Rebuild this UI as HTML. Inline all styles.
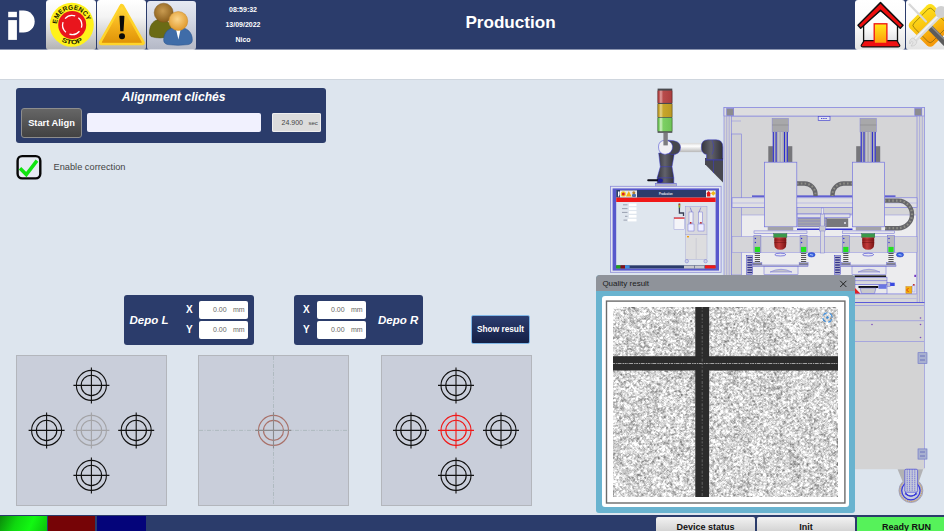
<!DOCTYPE html>
<html lang="en">
<head>
<meta charset="utf-8">
<title>Production</title>
<style>
html,body{margin:0;padding:0;}
body{width:944px;height:531px;overflow:hidden;position:relative;background:#dde5ee;font-family:"Liberation Sans",sans-serif;}
.abs{position:absolute;}
#hdr{left:0;top:0;width:944px;height:50px;background:linear-gradient(#2b3c6b 0,#2b3c6b 49px,#8b95b0 49px,#8b95b0 50px);}
#white{left:0;top:50px;width:944px;height:29px;background:#fff;border-bottom:1px solid #cfd6de;}
.hbtn{position:absolute;top:0;height:50px;border-radius:3px;background:linear-gradient(#ffffff 0%,#f4f4f4 34%,#c9c9c9 78%,#b4b4b4 98%,#dcdcdc 98%,#dcdcdc 100%);}
.htxt{position:absolute;color:#fff;font-weight:bold;font-size:7px;line-height:8px;text-align:center;width:80px;left:203px;}
#title{left:410.5px;width:200px;top:12.6px;text-align:center;color:#fff;font-weight:bold;font-size:17.1px;line-height:20px;}
.panel{position:absolute;background:#2b3c6b;border-radius:3px;}
.ital{font-style:italic;font-weight:bold;color:#fff;}
.inp{position:absolute;background:#fff;border-radius:2px;}
.small{position:absolute;font-size:7px;line-height:8px;color:#666;}
.lbl{position:absolute;color:#fff;font-weight:bold;font-size:10px;line-height:12px;}
.tbox{position:absolute;width:149px;height:149px;top:355px;background:#c9ceda;border:1px solid #b3b6bc;box-sizing:content-box;}
#bbar{left:0;top:515px;width:944px;height:16px;background:#2b3c6b;}
.bbtn{position:absolute;top:517px;height:14px;border-radius:2px 2px 0 0;background:linear-gradient(#f2f2f2,#d4d4d4);font-weight:bold;font-size:9px;line-height:20px;text-align:center;color:#111;overflow:hidden;}
</style>
</head>
<body>
<div class="abs" id="hdr"></div>
<div class="abs" id="white"></div>

<!-- header buttons -->
<div class="hbtn" style="left:46px;width:49.5px;"></div>
<div class="hbtn" style="left:97px;width:49px;"></div>
<div class="hbtn" style="left:147px;width:49px;top:1px;height:49px;background:linear-gradient(#e6e9f2 0%,#d4d8e4 40%,#b4b8c6 98%,#dcdee6 98%,#dcdee6 100%);"></div>
<div class="hbtn" style="left:855px;width:50px;background:linear-gradient(#ffffff 0%,#fafafa 50%,#e4e4e4 98%,#f2f2f2 98%,#f2f2f2 100%);"></div>
<div class="hbtn" style="left:906px;width:40px;background:linear-gradient(#ffffff 0%,#fafafa 50%,#e4e4e4 98%,#f2f2f2 98%,#f2f2f2 100%);"></div>

<div class="htxt" style="top:6px;">08:59:32</div>
<div class="htxt" style="top:20.7px;">13/09/2022</div>
<div class="htxt" style="top:36px;">Nico</div>
<div class="abs" id="title">Production</div>

<!-- alignment panel -->
<div class="panel" style="left:16px;top:88px;width:310px;height:55px;"></div>
<div class="abs ital" style="left:73.7px;top:90px;width:200px;text-align:center;font-size:12.13px;line-height:14px;">Alignment clichés</div>
<div class="abs" style="left:21px;top:108px;width:59px;height:28px;border:1px solid #8d8d8d;border-radius:3px;background:linear-gradient(#666666,#424242);color:#fff;font-weight:bold;font-size:9.3px;line-height:28px;text-align:center;">Start Align</div>
<div class="inp" style="left:87px;top:113px;width:174px;height:19px;background:#f1f1fe;"></div>
<div class="inp" style="left:272px;top:113px;width:49px;height:19px;background:#dcdcdc;box-shadow:inset 0 0 0 1px #efefef;"></div>
<div class="small" style="left:281.6px;top:119px;color:#444;">24.900</div>
<div class="small" style="left:308.4px;top:119.3px;color:#444;font-size:6.1px;">sec</div>

<!-- checkbox -->
<svg class="abs" style="left:0;top:140px;" width="60" height="50" viewBox="0 140 60 50"><rect x="17.6" y="156.1" width="22.7" height="22.3" rx="4.6" fill="#e6ebf3" stroke="#080808" stroke-width="2.4"/><path d="M20 168.2 L26.3 174.6 L37 160.6" fill="none" stroke="#10e410" stroke-width="3.5"/></svg>
<div class="abs" style="left:53.5px;top:161.7px;font-size:9.25px;line-height:11px;color:#444;">Enable correction</div>

<!-- Depo L -->
<div class="panel" style="left:124px;top:295px;width:130px;height:50px;"></div>
<div class="abs ital" style="left:129.5px;top:313px;font-size:11.5px;line-height:14px;">Depo L</div>
<div class="lbl" style="left:186px;top:304px;">X</div>
<div class="lbl" style="left:186px;top:324px;">Y</div>
<div class="inp" style="left:199px;top:301px;width:49px;height:18px;"></div>
<div class="inp" style="left:199px;top:321px;width:49px;height:18px;"></div>
<div class="small" style="left:213px;top:306px;">0.00</div><div class="small" style="left:233px;top:306px;">mm</div>
<div class="small" style="left:213px;top:326px;">0.00</div><div class="small" style="left:233px;top:326px;">mm</div>

<!-- Depo R -->
<div class="panel" style="left:294px;top:295px;width:129px;height:50px;"></div>
<div class="abs ital" style="left:378px;top:313px;font-size:11.5px;line-height:14px;">Depo R</div>
<div class="lbl" style="left:303px;top:304px;">X</div>
<div class="lbl" style="left:303px;top:324px;">Y</div>
<div class="inp" style="left:317px;top:301px;width:49px;height:18px;"></div>
<div class="inp" style="left:317px;top:321px;width:49px;height:18px;"></div>
<div class="small" style="left:331px;top:306px;">0.00</div><div class="small" style="left:351px;top:306px;">mm</div>
<div class="small" style="left:331px;top:326px;">0.00</div><div class="small" style="left:351px;top:326px;">mm</div>

<!-- Show result -->
<div class="abs" style="left:471px;top:315px;width:57px;height:27px;border:1px solid #7fb6e6;border-radius:2px;background:linear-gradient(#2c3e70,#141f45);color:#fff;font-weight:bold;font-size:8.3px;line-height:27px;text-align:center;">Show result</div>

<!-- target boxes -->
<div class="tbox" style="left:16px;"></div>
<div class="tbox" style="left:198px;"></div>
<div class="tbox" style="left:381px;"></div>

<!-- bottom bar -->
<div class="abs" id="bbar"></div>
<div class="abs" style="left:0;top:516px;width:47px;height:15px;background:linear-gradient(115deg,#0a8a0a 0%,#0fd80f 35%,#12f812 65%,#0cc00c 100%);"></div>
<div class="abs" style="left:48px;top:516px;width:47px;height:15px;background:#760406;"></div>
<div class="abs" style="left:97px;top:516px;width:49px;height:15px;background:#04047a;"></div>
<div class="bbtn" style="left:656px;width:99px;">Device status</div>
<div class="bbtn" style="left:757px;width:98px;">Init</div>
<div class="bbtn" style="left:857px;width:99px;background:#56f25a;border-radius:0;">Ready RUN</div>

<!-- ILLUSTRATION SVG -->
<svg class="abs" id="art" style="left:0;top:0;" width="944" height="531" viewBox="0 0 944 531">
<defs>
<linearGradient id="gTri" x1="0" y1="0" x2="0" y2="1"><stop offset="0" stop-color="#ffd83a"/><stop offset="0.5" stop-color="#f4b21c"/><stop offset="1" stop-color="#e09408"/></linearGradient>
<radialGradient id="gHeadB" cx="0.45" cy="0.4" r="0.6"><stop offset="0" stop-color="#c99b50"/><stop offset="1" stop-color="#8a5e1c"/></radialGradient>
<radialGradient id="gHeadF" cx="0.45" cy="0.4" r="0.6"><stop offset="0" stop-color="#fbd58a"/><stop offset="1" stop-color="#e09a2e"/></radialGradient>
<linearGradient id="gDoor" x1="0" y1="0" x2="0" y2="1"><stop offset="0" stop-color="#ffe81a"/><stop offset="1" stop-color="#ff9a0a"/></linearGradient>
<linearGradient id="gWall" x1="0" y1="0" x2="0" y2="1"><stop offset="0" stop-color="#ffffff"/><stop offset="0.55" stop-color="#fbfbfb"/><stop offset="1" stop-color="#dcdce0"/></linearGradient>
<linearGradient id="gDia" x1="0" y1="0" x2="1" y2="0.35"><stop offset="0" stop-color="#ffe61e"/><stop offset="0.5" stop-color="#fbc812"/><stop offset="1" stop-color="#f59a0a"/></linearGradient>
<g id="tgt"><circle r="15" fill="none" stroke-width="1.1"/><circle r="10.2" fill="none" stroke-width="1.1"/><path d="M-18 0H18M0 -18V18" fill="none" stroke-width="1.1"/></g>
<path id="arcTop" d="M56.84 23.93 A15.4 15.4 0 0 1 87.00 20.76"/>
<path id="arcBot" d="M61.41 41.00 A19.3 19.3 0 0 0 82.99 41.00"/>
</defs>

<!-- logo -->
<g fill="#fff"><rect x="8.2" y="11.8" width="8.7" height="5.4"/><rect x="8.2" y="20.1" width="8.7" height="19.8"/><path d="M19.2 10.4H23.6A11.1 11.1 0 0 1 23.6 32.6H19.2Z"/></g>

<!-- emergency stop -->
<circle cx="71.8" cy="24.8" r="22" fill="#fff21a"/>
<circle cx="72.2" cy="25" r="14" fill="#e9151d"/>
<circle cx="72.2" cy="25" r="9.6" fill="none" stroke="#fff" stroke-width="1.3" stroke-dasharray="11 4.1" transform="rotate(-50 72.2 25)"/>
<text font-family="Liberation Sans, sans-serif" font-weight="bold" font-size="6.6" fill="#1a1a00" textLength="42.5" lengthAdjust="spacingAndGlyphs"><textPath href="#arcTop" textLength="42.5" lengthAdjust="spacingAndGlyphs">EMERGENCY</textPath></text>
<text font-family="Liberation Sans, sans-serif" font-weight="bold" font-size="6.4" fill="#1a1a00"><textPath href="#arcBot" textLength="22.4" lengthAdjust="spacingAndGlyphs">STOP</textPath></text>

<!-- warning -->
<path d="M121.8 6.4 L142.3 42.8 L101.3 42.8 Z" fill="#ffd42a" stroke="#ffd42a" stroke-width="5" stroke-linejoin="round"/>
<path d="M121.8 7.6 L141.2 42.2 L102.4 42.2 Z" fill="url(#gTri)" stroke="url(#gTri)" stroke-width="1.2" stroke-linejoin="round"/>
<path d="M119.4 16.6 Q119.4 15.8 120.2 15.8 H123.6 Q124.4 15.8 124.4 16.6 L123.5 31.2 H120.3Z" fill="#0a0a0a"/><circle cx="122" cy="36.2" r="3" fill="#0a0a0a"/>

<!-- users -->
<path d="M149.5 33 C149.5 24 154 19.5 160.5 19.5 C167 19.5 171.5 24 171.5 30 L171.5 36 Q160 39.5 151 36.5 Q149.5 35.5 149.5 33Z" fill="#6b6b15" stroke="#54540e" stroke-width="0.6"/>
<circle cx="163.7" cy="12.7" r="9.5" fill="url(#gHeadB)" stroke="#7a5418" stroke-width="0.5"/>
<path d="M163.7 40 C163.7 32 169 27.3 178 27.3 C187 27.3 192.3 32 192.3 40 Q192.3 43.8 188 44.6 Q178 46 168 44.6 Q163.7 43.8 163.7 40Z" fill="#3f6ca8" stroke="#2d568e" stroke-width="0.6"/>
<path d="M175.8 28.5 L180.8 28.5 L178.4 39.5Z" fill="#fff"/>
<circle cx="178.3" cy="21" r="9.5" fill="url(#gHeadF)" stroke="#c98a2a" stroke-width="0.5"/>

<!-- home -->
<path d="M863.6 24 L863.6 44 L897.5 44 L897.5 24 L880.5 10.5Z" fill="url(#gWall)" stroke="#111" stroke-width="1.3"/>
<path d="M864.2 40.6 L896.9 40.6 L899.8 45.2 Q900 46.9 898.2 46.9 L862.8 46.9 Q861 46.9 861.2 45.2Z" fill="#f01010" stroke="#111" stroke-width="1.1" stroke-linejoin="round"/>
<rect x="874.2" y="23.8" width="12.7" height="19.6" fill="url(#gDoor)" stroke="#f01010" stroke-width="1.3"/>
<path d="M880.5 2.6 L903 25.2 L900.3 28.2 L880.5 10.2 L860.7 28.2 L858 25.2Z" fill="#ee0f0f" stroke="#111" stroke-width="1.5" stroke-linejoin="round"/>

<!-- tools -->
<rect x="913.7" y="8.9" width="33" height="33" rx="4.5" transform="rotate(45 930.2 25.4)" fill="url(#gDia)"/>
<rect x="917.2" y="12.4" width="26" height="26" rx="3" transform="rotate(45 930.2 25.4)" fill="none" stroke="#6a5a10" stroke-width="0.6"/>
<path d="M909.5 4.5 L926 21.5" stroke="#d8d8d8" stroke-width="2.2" stroke-linecap="round"/>
<path d="M929 26.5 L946 44" stroke="#5c5c5c" stroke-width="6"/>
<path d="M930 25 L946 41" stroke="#8e8e8e" stroke-width="1.4"/>
<path d="M914.5 40.5 L946 9" stroke="#dcdcdc" stroke-width="4.6"/>
<path d="M915 39 L944 10" stroke="#f4f4f4" stroke-width="1.6"/>
<path d="M909.8 44 Q908.6 39.5 913 37.8 L917 41.6 Q915.6 46.6 911 46 L913.2 42.6 L911.6 41.2Z" fill="#e4e4e4" stroke="#bdbdbd" stroke-width="0.5"/>
<circle cx="941" cy="12" r="6" fill="#d0d0d0"/>

<!-- targets left -->
<g stroke="#111"><use href="#tgt" x="91.4" y="385.4"/><use href="#tgt" x="46.6" y="430.4"/><use href="#tgt" x="136.2" y="430.4"/><use href="#tgt" x="91.4" y="475.4"/></g>
<g stroke="#a3a3a6"><use href="#tgt" x="91.4" y="430.4"/></g>
<!-- middle -->
<path d="M199 430.4H349M273.5 356V505" stroke="#a4b2b4" stroke-width="0.7" stroke-dasharray="4 1.5 1 1.5" fill="none"/>
<g stroke="#a9726a" fill="none" stroke-width="1.15"><circle cx="273.5" cy="430.4" r="15"/><circle cx="273.5" cy="430.4" r="10"/><path d="M255.2 430.4H291.4M273.5 412.2V448.4" stroke="#8a8a8c" stroke-width="1.1"/></g>
<!-- targets right -->
<g stroke="#111"><use href="#tgt" x="456" y="385.4"/><use href="#tgt" x="411" y="430.4"/><use href="#tgt" x="501" y="430.4"/><use href="#tgt" x="456" y="475.4"/></g>
<g stroke="#f01818"><use href="#tgt" x="456" y="430.4"/></g>
<defs>
<linearGradient id="gTube" x1="0" y1="0" x2="0" y2="1"><stop offset="0" stop-color="#d8d8d8"/><stop offset="0.35" stop-color="#ffffff"/><stop offset="1" stop-color="#b8b8b8"/></linearGradient>
<linearGradient id="gJoint" x1="0" y1="0" x2="1" y2="0"><stop offset="0" stop-color="#34343c"/><stop offset="0.45" stop-color="#62626c"/><stop offset="1" stop-color="#303038"/></linearGradient>
<linearGradient id="gRed" x1="0" y1="0" x2="1" y2="0"><stop offset="0" stop-color="#8c3030"/><stop offset="0.1" stop-color="#b84848"/><stop offset="0.22" stop-color="#e0a0a0"/><stop offset="0.38" stop-color="#b84c4c"/><stop offset="0.9" stop-color="#ac4040"/><stop offset="1" stop-color="#7c2c2c"/></linearGradient>
<linearGradient id="gYel" x1="0" y1="0" x2="1" y2="0"><stop offset="0" stop-color="#94781c"/><stop offset="0.1" stop-color="#c8a42c"/><stop offset="0.22" stop-color="#e6d48c"/><stop offset="0.38" stop-color="#c8a62c"/><stop offset="0.9" stop-color="#bc9a24"/><stop offset="1" stop-color="#8c7018"/></linearGradient>
<linearGradient id="gGrn" x1="0" y1="0" x2="1" y2="0"><stop offset="0" stop-color="#4c9838"/><stop offset="0.1" stop-color="#78cc60"/><stop offset="0.22" stop-color="#d0f0c4"/><stop offset="0.38" stop-color="#7cd064"/><stop offset="0.9" stop-color="#70c458"/><stop offset="1" stop-color="#4c9038"/></linearGradient>
<linearGradient id="gPad" x1="0" y1="0" x2="1" y2="0"><stop offset="0" stop-color="#8c1a1a"/><stop offset="0.4" stop-color="#c23a3a"/><stop offset="1" stop-color="#7a1414"/></linearGradient>
<g id="pillar"><rect x="-3.5" y="235.5" width="7" height="17" fill="#b8b8c0" stroke="#6a6ad8" stroke-width="0.5"/><rect x="-2.6" y="246.9" width="5.2" height="5.2" fill="#22e022"/><circle cx="-2" cy="238.5" r="0.7" fill="#3030d0"/><circle cx="-2" cy="242.5" r="0.7" fill="#3030d0"/><path d="M-2.6 253.5H2.6M-2.6 255.5H2.6M-2.6 257.5H2.6M-2.6 259.5H2.6M-2.6 261.5H2.6" stroke="#555" stroke-width="1"/><rect x="-4.5" y="262.8" width="9" height="2.2" fill="#888" stroke="#6a6ad8" stroke-width="0.4"/></g>
<g id="pad"><rect x="-6.6" y="233.7" width="13.2" height="3.8" fill="#3a9a4a" stroke="#2a6a3a" stroke-width="0.4"/><path d="M-6 237.5H6V244Q6 249.8 0 249.8Q-6 249.8 -6 244Z" fill="url(#gPad)"/><path d="M-6 240H6M-6 242.5H6" stroke="#6a1010" stroke-width="0.5"/><ellipse cx="0" cy="254.6" rx="5.5" ry="1.4" fill="#e8e8f0" stroke="#3838d0" stroke-width="0.6"/></g>
<g id="col"><rect x="-8.2" y="118.3" width="16.4" height="13.7" fill="#a8a8aa" stroke="#8888d8" stroke-width="0.5"/><path d="M-8.2 125H8.2" stroke="#88888c" stroke-width="0.6"/><rect x="-12" y="146.2" width="24" height="16" fill="#76767a"/><rect x="-7.5" y="132" width="15" height="30.2" fill="#aeaeb4"/><path d="M-7 132V162M-4.2 132V162M4.2 132V162M7 132V162" stroke="#2a2ad0" stroke-width="1.1"/><path d="M-1.5 132V162M1.5 132V162" stroke="#d0d0d8" stroke-width="0.8"/></g>
<g id="stack"><rect x="-3" y="255.3" width="6" height="19" fill="#d0d0d8" stroke="#3838c8" stroke-width="0.5"/><path d="M-2.4 257.5H2.4M-2.4 260H2.4M-2.4 262.5H2.4M-2.4 265H2.4M-2.4 267.5H2.4M-2.4 270H2.4M-2.4 272.5H2.4" stroke="#30308a" stroke-width="1.3"/></g>
</defs>

<!-- ===== main frame upper ===== -->
<g stroke="#7c7ce0" stroke-width="0.6">
<rect x="724" y="107.5" width="200.5" height="196" fill="#d3d3d5"/>
<rect x="731.5" y="116" width="185.5" height="187" fill="#d5d5d7"/>
<rect x="724" y="107.5" width="200.5" height="8.5" fill="#dddddf"/>
<rect x="726.7" y="108.5" width="7" height="7" fill="#8c8c90"/>
<rect x="914.8" y="108.5" width="7" height="7" fill="#8c8c90"/>
<rect x="731.6" y="134" width="9.8" height="141" fill="#d0d0d3"/>
</g>
<rect x="818.2" y="116.4" width="11.8" height="4" fill="#e4e4ee" stroke="#4a4ad0" stroke-width="0.7"/>
<path d="M821 118.5H827" stroke="#3a3ad0" stroke-width="0.9" stroke-dasharray="1.4 0.8"/>
<path d="M726.7 116V303M729.2 116V275M919.6 116V303M922.3 116V303" stroke="#8a8ae0" stroke-width="0.5" fill="none"/>
<path d="M731.5 121H741" stroke="#8a8ae0" stroke-width="0.5" fill="none"/>

<!-- white lower zone -->
<rect x="741.5" y="215" width="175" height="79" fill="#ececee" stroke="#8c8ce0" stroke-width="0.5"/>
<!-- beam -->
<rect x="732" y="197.8" width="185" height="9.8" fill="#dfdfe3" stroke="#7070e0" stroke-width="0.6"/>
<path d="M732 203H917" stroke="#9a9ae0" stroke-width="0.5"/>
<!-- mid band -->
<rect x="732" y="236.6" width="185" height="15.8" fill="#d5d5d9" stroke="#8c8ce0" stroke-width="0.5"/>

<!-- dark plate between boxes -->
<rect x="797" y="207.6" width="55.5" height="6.4" fill="#d0d0d4" stroke="#7a7ae0" stroke-width="0.5"/>
<rect x="797" y="214" width="53" height="3.6" fill="#e0e0e6" stroke="#5a5ad8" stroke-width="0.5"/>
<rect x="797.8" y="218.2" width="29" height="8.6" fill="#a6a6aa" stroke="#5a5ad0" stroke-width="0.5"/>
<path d="M798 221H826M798 224H826" stroke="#7070c8" stroke-width="0.5"/>
<rect x="826.6" y="218.4" width="21.6" height="8.6" fill="#78787c"/>
<circle cx="845" cy="223" r="1" fill="#e8e8f0"/>
<path d="M797 229.2H852.5" stroke="#3434d0" stroke-width="1.4"/>
<path d="M797 196.2H852.5M752 196.2H764.4M884.6 196.2H895.5" stroke="#3a3ad0" stroke-width="1.2"/>

<!-- cable chains -->
<g fill="none" stroke-linecap="butt">
<path d="M797 183.5 H804.5 A11 11 0 0 1 815.5 194.5 V196" stroke="#66666a" stroke-width="4.4"/>
<path d="M797 183.5 H804.5 A11 11 0 0 1 815.5 194.5 V196" stroke="#8e8e86" stroke-width="2" stroke-dasharray="1.6 2.2"/>
<path d="M852.4 183.5 H843.5 A11 11 0 0 0 832.5 194.5 V196" stroke="#66666a" stroke-width="4.4"/>
<path d="M852.4 183.5 H843.5 A11 11 0 0 0 832.5 194.5 V196" stroke="#8e8e86" stroke-width="2" stroke-dasharray="1.6 2.2"/>
<path d="M884.6 200.6 H898.2 A13.8 13.8 0 0 1 898.2 228.2 H885" stroke="#66666a" stroke-width="4.4"/>
<path d="M884.6 200.6 H898.2 A13.8 13.8 0 0 1 898.2 228.2 H885" stroke="#8e8e86" stroke-width="2.2" stroke-dasharray="1.6 2.2"/>
</g>

<!-- columns -->
<use href="#col" x="780.3"/>
<use href="#col" x="868.2"/>
<!-- big boxes -->
<rect x="764.4" y="162.2" width="32.4" height="64.6" fill="#dddddf" stroke="#7474e0" stroke-width="0.7"/>
<rect x="852.6" y="162.2" width="32" height="64.6" fill="#dddddf" stroke="#7474e0" stroke-width="0.7"/>
<rect x="767.7" y="226.8" width="25.5" height="3.6" fill="#a2a2a8"/>
<rect x="855.8" y="226.8" width="25.5" height="3.6" fill="#a2a2a8"/>
<!-- thin plates -->
<rect x="754" y="230.9" width="53" height="2.8" fill="#e4e4ea" stroke="#6a6ad8" stroke-width="0.5"/>
<rect x="842.5" y="230.9" width="52" height="2.8" fill="#e4e4ea" stroke="#6a6ad8" stroke-width="0.5"/>

<!-- central pin -->
<rect x="820.3" y="214" width="4" height="39" fill="#d8d8de" stroke="#7a7ad8" stroke-width="0.5"/>
<rect x="821.3" y="208" width="2" height="6" fill="#e8e8ee" stroke="#7a7ad8" stroke-width="0.4"/>
<rect x="819.3" y="226" width="6" height="5" fill="#c8c8d0" stroke="#7a7ad8" stroke-width="0.4"/>

<!-- pillars, pads -->
<use href="#pillar" x="757.4"/><use href="#pillar" x="803.6"/><use href="#pillar" x="845.8"/><use href="#pillar" x="891"/>
<use href="#pad" x="780.3"/><use href="#pad" x="868.2"/>
<use href="#stack" x="749.7"/><use href="#stack" x="837.5"/>
<ellipse cx="811.5" cy="254.8" rx="3.6" ry="2.2" fill="#3a66e0" stroke="#2030c0" stroke-width="0.5"/>
<ellipse cx="900" cy="254.8" rx="3.6" ry="2.2" fill="#3a66e0" stroke="#2030c0" stroke-width="0.5"/>
<path d="M810 254.5 L813 255.2" stroke="#cfe0ff" stroke-width="0.8"/><path d="M898.5 254.5 L901.5 255.2" stroke="#cfe0ff" stroke-width="0.8"/>

<!-- lower tables -->
<g stroke="#6a6ad8" stroke-width="0.5">
<rect x="752" y="265" width="56" height="1.6" fill="#c0c0c8"/>
<rect x="764" y="266.6" width="34" height="8" fill="#e6e6ec"/>
<path d="M770 272 Q781 266.5 792 272Z" fill="#c4c4cc"/>
<rect x="840" y="265" width="56" height="1.6" fill="#c0c0c8"/>
<rect x="852" y="266.6" width="34" height="8" fill="#e6e6ec"/>
<path d="M858 272 Q869 266.5 880 272Z" fill="#c4c4cc"/>
</g>
<!-- lower right visible area beside dialog -->
<g stroke="#5a5ad8" stroke-width="0.5">
<rect x="854.5" y="275.4" width="31.6" height="1.8" fill="#1a1a1a" stroke="none"/>
<rect x="855" y="277.2" width="32" height="7.4" fill="#d8d8dc"/>
<path d="M855 280.6H887" fill="none"/>
<rect x="855" y="284.6" width="32" height="9.3" fill="#e8e8ec"/>
<rect x="858.5" y="286" width="19.7" height="2" fill="#111" stroke="none"/>
<path d="M860 288H876L874.5 293.5H861.5Z" fill="#c8c8cc"/>
<rect x="878.5" y="284.8" width="8" height="4" fill="#4a5ae0" stroke="none" opacity="0.8"/>
<rect x="887" y="282.4" width="3.4" height="3.8" fill="#c8c8d4"/>
<rect x="890.2" y="282.7" width="4.5" height="3.3" fill="#3a4ae0" stroke="none"/>
</g>
<path d="M855 293.8 L860.5 293.8 L855 288Z" fill="#e02020"/>
<rect x="905.9" y="286.6" width="5.9" height="6.9" fill="#f2b010" stroke="#c07800" stroke-width="0.4"/>
<path d="M908.6 288 L906.6 290 L908.6 292" stroke="#e03010" stroke-width="0.9" fill="none"/>
<rect x="912.6" y="285" width="2.4" height="7" fill="#e4e4ec" stroke="#8a8ad8" stroke-width="0.4"/>
<rect x="913" y="284" width="1.6" height="1.6" fill="#c03030"/>
<rect x="914.3" y="274.8" width="1.8" height="2.2" fill="#7a3ac0"/>
<rect x="855" y="294" width="61.5" height="9.8" fill="#d6d6d8"/>
<path d="M855 294H916.5" stroke="#7a7ae0" stroke-width="0.6"/>
<path d="M855 302.8H924.5" stroke="#5a5ad8" stroke-width="1.8"/>
<path d="M855 298.5H916.5" stroke="#a8a8e0" stroke-width="0.5"/>

<!-- ===== cabinet lower ===== -->
<rect x="855" y="303" width="69.8" height="166.2" fill="#d3d3d4"/>
<path d="M924.5 303V468" stroke="#9a9ae0" stroke-width="0.7"/>
<path d="M855 305.5H924M855 320.7H924M855 341.5H924" stroke="#9a9ae0" stroke-width="0.8"/>
<g fill="#7a4ac0"><circle cx="872" cy="324.5" r="0.8"/><circle cx="920.5" cy="318" r="0.8"/><circle cx="920.5" cy="324.5" r="0.8"/><circle cx="920.5" cy="337.5" r="0.8"/></g>
<rect x="918" y="352.7" width="9" height="10.8" fill="#a8b0d0" stroke="#6a72c8" stroke-width="0.6"/>
<path d="M920 356H925M920 360H925" stroke="#5a62b8" stroke-width="0.8"/>
<rect x="918" y="448.9" width="9" height="10.2" fill="#a8b0d0" stroke="#6a72c8" stroke-width="0.6"/>
<path d="M920 452H925M920 456H925" stroke="#5a62b8" stroke-width="0.8"/>
<!-- wheel -->
<circle cx="910.9" cy="490.6" r="12" fill="#b9bcc8" stroke="#8a8ab0" stroke-width="0.6"/>
<circle cx="910.9" cy="490.6" r="10.9" fill="none" stroke="#d89030" stroke-width="0.8" stroke-dasharray="1.2 1"/>
<circle cx="910.9" cy="490.6" r="9.2" fill="#c8ccdc" stroke="#3a3ad8" stroke-width="1.3"/>
<circle cx="910.9" cy="490.6" r="5.6" fill="#d4d8e6" stroke="#3a3ad8" stroke-width="1"/>
<path d="M897.6 469.2H923.2L918.4 483H903.2Z" fill="#b2b2b4"/>
<rect x="904.8" y="469.2" width="12.8" height="23" rx="1.5" fill="#c6cada" stroke="#4a4ad8" stroke-width="0.7"/>
<path d="M907.2 469.2V491M909.6 469.2V491M912.2 469.2V491M914.8 469.2V491" stroke="#5a5ad8" stroke-width="0.7" stroke-dasharray="1.5 0.6"/>
<path d="M905 493.5 Q910.9 498.5 917 493.5" stroke="#3a3ad8" stroke-width="1.2" fill="none"/>

<!-- ===== tower light & arm ===== -->
<rect x="657.6" y="88.6" width="14.7" height="44.2" fill="#4a4a4e"/>
<rect x="657.6" y="90.6" width="14.7" height="12.3" fill="url(#gRed)"/>
<rect x="657.6" y="104" width="14.7" height="13" fill="url(#gYel)"/>
<rect x="657.6" y="117.7" width="14.7" height="13.6" fill="url(#gGrn)"/>
<!-- horizontal tube -->
<rect x="678" y="142.9" width="28" height="9.2" fill="url(#gTube)"/>
<!-- right joint + bracket -->
<path d="M705 158 H723 V182.6 L705 164.3Z" fill="#484850"/>
<path d="M713.5 160 V173" stroke="#3a3ad0" stroke-width="0.5"/>
<path d="M705 160.2H723" stroke="#3a3ad0" stroke-width="0.4"/>
<path d="M701.3 147 Q701.3 139.8 708 139.8 H716 Q722.8 139.8 722.8 147 V159.6 H706.5 V154.5 Q701.3 153.5 701.3 147Z" fill="url(#gJoint)" stroke="#3a3ad0" stroke-width="0.5"/>
<path d="M712 140.5 Q715.5 147 712 154.5" stroke="#3a3ad0" stroke-width="0.5" fill="none"/>
<!-- vertical joint -->
<path d="M658.7 153 L660.3 166.7 L657.2 177.8 V183.3 H673.8 V177.8 L672 166.7 L674.4 153Z" fill="url(#gJoint)" stroke="#3a3ad0" stroke-width="0.5"/>
<path d="M660.3 166.7H672M657.2 177.8H673.8" stroke="#3a3ad0" stroke-width="0.5"/>
<path d="M668 140.2 Q680.5 140.2 680.5 147.2 Q680.5 154.6 672 154.6 L668 153Z" fill="#46464e" stroke="#3a3ad0" stroke-width="0.5"/>
<path d="M658.5 147 Q658.5 140.4 665 140.4 Q671.5 140.4 672.6 146 Q672.8 153.4 665 154.4 Q658.5 153.6 658.5 147Z" fill="#f0f0f4" stroke="#3a3ad0" stroke-width="0.5"/>
<rect x="663.4" y="133" width="4.4" height="12.4" fill="#7c7c80"/>
<rect x="655.8" y="183.3" width="20.4" height="3" fill="#b4b4c4" stroke="#3a3ad0" stroke-width="0.4"/>
<rect x="647.2" y="179.2" width="11.5" height="2.1" rx="1" fill="#0a0a14"/>
<ellipse cx="660.4" cy="180.6" rx="2.6" ry="2.2" fill="#1c1c98"/>

<!-- ===== monitor ===== -->
<rect x="610.4" y="186.3" width="110.7" height="86" fill="#e4e6f2" stroke="#8a8ad8" stroke-width="0.8"/>
<rect x="612.6" y="188.4" width="106.4" height="82.2" fill="#5858cc"/>
<rect x="616.2" y="190" width="99.4" height="78.4" fill="#dfe6ee"/>
<rect x="616.2" y="190" width="99.4" height="7.6" fill="#2b3c6b"/>
<rect x="616.2" y="197.6" width="99.4" height="4.4" fill="#f01818"/>
<rect x="616.2" y="265.3" width="99.4" height="3.1" fill="#2b3c6b"/>
<rect x="616.2" y="265.3" width="4.4" height="3.1" fill="#20a020"/><rect x="620.6" y="265.3" width="4.4" height="3.1" fill="#801018"/><rect x="625" y="265.3" width="4.6" height="3.1" fill="#3a8ae0"/>
<rect x="684" y="265.6" width="10" height="2.8" fill="#c8c8cc"/><rect x="694.5" y="265.6" width="10" height="2.8" fill="#c8c8cc"/><rect x="705" y="265.3" width="10.6" height="3.1" fill="#f01818"/>
<!-- mini header icons -->
<rect x="620" y="190.4" width="17" height="7" fill="#e8e8e8"/>
<path d="M618 191.5h1.2v5h-1.2z M619.6 191.5h0.8a1.8 1.8 0 0 1 0 3.6h-0.8z" fill="#fff"/>
<circle cx="623.3" cy="193.9" r="2.6" fill="#f0d020"/><circle cx="623.3" cy="193.9" r="1.5" fill="#e02020"/>
<path d="M628.8 191 L631.6 196.6 H626Z" fill="#f0b010"/>
<circle cx="633.8" cy="192.8" r="1.5" fill="#b08030"/><rect x="632" y="194" width="4" height="3" rx="1" fill="#4a70a8"/>
<rect x="706" y="190.4" width="9.6" height="7" fill="#f4f4f4"/>
<path d="M708.6 191 L711 193.6 H710.3 V196.6 H706.9 V193.6 H706.2Z" fill="#e01818"/>
<rect x="711.6" y="191.6" width="3.4" height="3.4" transform="rotate(45 713.3 193.3)" fill="#f0b818"/>
<text x="665.8" y="194.6" font-family="Liberation Sans, sans-serif" font-weight="bold" font-size="2.6" fill="#e8ecf6" text-anchor="middle">Production</text>
<!-- mini fields -->
<g fill="#fff"><rect x="629" y="203.5" width="7.5" height="2.6"/><rect x="629" y="207.3" width="7.5" height="2.6"/><rect x="629" y="211.1" width="7.5" height="2.6"/><rect x="629" y="215" width="7.5" height="2.6"/><rect x="628" y="218.8" width="8.5" height="2.6"/></g>
<g fill="#9aa0b0"><rect x="623" y="204.3" width="4.5" height="1"/><rect x="622" y="208.1" width="5.5" height="1"/><rect x="622" y="211.9" width="5.5" height="1"/><rect x="625" y="215.8" width="2.5" height="1"/><rect x="623.5" y="219.6" width="3.5" height="1"/></g>
<!-- mini machine -->
<rect x="685.5" y="206.5" width="21.5" height="28" fill="#d8d8de" stroke="#8a8ad8" stroke-width="0.4"/>
<rect x="685.5" y="234.5" width="21.5" height="25" fill="#dddddf" stroke="#a0a0d0" stroke-width="0.4"/>
<path d="M696.2 238V259" stroke="#b0b0c8" stroke-width="0.4"/>
<rect x="689" y="212" width="4" height="11" fill="#f0f0f4" stroke="#5a5ad0" stroke-width="0.4"/><rect x="698.5" y="212" width="4" height="11" fill="#f0f0f4" stroke="#5a5ad0" stroke-width="0.4"/>
<path d="M690.2 207.5L691.8 212M700.8 207.5L699.2 212" stroke="#7a7ad0" stroke-width="0.8"/>
<rect x="688" y="224" width="6" height="7" fill="#eef" stroke="#5a5ad0" stroke-width="0.4"/><rect x="698" y="224" width="6" height="7" fill="#eef" stroke="#5a5ad0" stroke-width="0.4"/>
<rect x="690" y="222" width="1.4" height="1.6" fill="#c02020"/><rect x="700.2" y="222" width="1.4" height="1.6" fill="#c02020"/>
<circle cx="686.8" cy="261.2" r="1.7" fill="#d0d4e4" stroke="#5a5ad0" stroke-width="0.4"/><circle cx="705.6" cy="261.2" r="1.7" fill="#d0d4e4" stroke="#5a5ad0" stroke-width="0.4"/>
<rect x="687" y="236" width="2" height="1.4" fill="#f0a010"/>
<rect x="674" y="217.5" width="10.5" height="12" fill="#f4f4f8" stroke="#8a8ad0" stroke-width="0.4"/><rect x="674" y="217.5" width="10.5" height="1.2" fill="#e02020"/>
<rect x="678.6" y="203.6" width="1.6" height="4.6" fill="#50a040"/><rect x="678.6" y="203.6" width="1.6" height="1.5" fill="#c03030"/><rect x="678.6" y="205.1" width="1.6" height="1.5" fill="#c0a020"/>
<path d="M679.4 208V213H683.5V216" stroke="#3a3c54" stroke-width="1.3" fill="none"/>


</svg>

<!-- quality dialog -->
<div class="abs" id="dlg" style="left:596px;top:275px;width:259px;height:238px;background:#69b3cf;border-radius:4px 4px 3px 3px;"></div>
<div class="abs" style="left:596px;top:275px;width:259px;height:16px;background:#8f939a;border-radius:4px 4px 0 0;"></div>
<div class="abs" style="left:602.4px;top:279px;font-size:8px;line-height:10px;color:#1c1c1c;">Quality result</div>
<div class="abs" style="left:602px;top:296px;width:247px;height:211px;background:#fff;border-radius:3px;"></div>
<svg class="abs" style="left:0;top:0;" width="944" height="531" viewBox="0 0 944 531">
<defs>
<filter id="nz" x="0" y="0" width="1" height="1" color-interpolation-filters="sRGB">
<feTurbulence type="fractalNoise" baseFrequency="1.7" numOctaves="1" seed="7"/>
<feColorMatrix type="matrix" values="1 0 0 0 0  1 0 0 0 0  1 0 0 0 0  0 0 0 0 1"/>
<feConvolveMatrix order="3" kernelMatrix="1 2 1 2 8 2 1 2 1" divisor="20" edgeMode="duplicate" preserveAlpha="true"/>
<feColorMatrix type="matrix" values="2.4 0 0 0 -0.365  2.4 0 0 0 -0.365  2.4 0 0 0 -0.365  0 0 0 0 1"/>
</filter>
</defs>
<rect x="613" y="307" width="225" height="190" fill="#ccc" filter="url(#nz)"/>
<rect x="695.3" y="307" width="13.8" height="190" fill="#2c2c2c"/>
<rect x="613" y="356.2" width="225" height="14.3" fill="#2c2c2c"/>
<path d="M613 363.5H838" stroke="#a4a4a4" stroke-width="1" stroke-dasharray="2 0.8 1 0.7 4 1 1.5 0.6"/>
<path d="M702.2 307V497" stroke="#6a6a6a" stroke-width="0.9" stroke-dasharray="2 1.6 1 2.2 3 1.4"/>
<path d="M840.2 280.8L846.4 287M846.4 280.8L840.2 287" stroke="#1a1a1a" stroke-width="0.95" fill="none"/>
<rect x="606.5" y="301.1" width="238.4" height="201.9" fill="none" stroke="#6c6c6c" stroke-width="1.4"/>
<g fill="none" stroke="#3a8ee0" stroke-width="1.1"><circle cx="827.5" cy="317.5" r="4.7" stroke-dasharray="4.9 2.5" transform="rotate(20 827.5 317.5)"/><circle cx="827.5" cy="317.5" r="1.2" fill="#3a8ee0" stroke="none"/></g>

</svg>
</body>
</html>
